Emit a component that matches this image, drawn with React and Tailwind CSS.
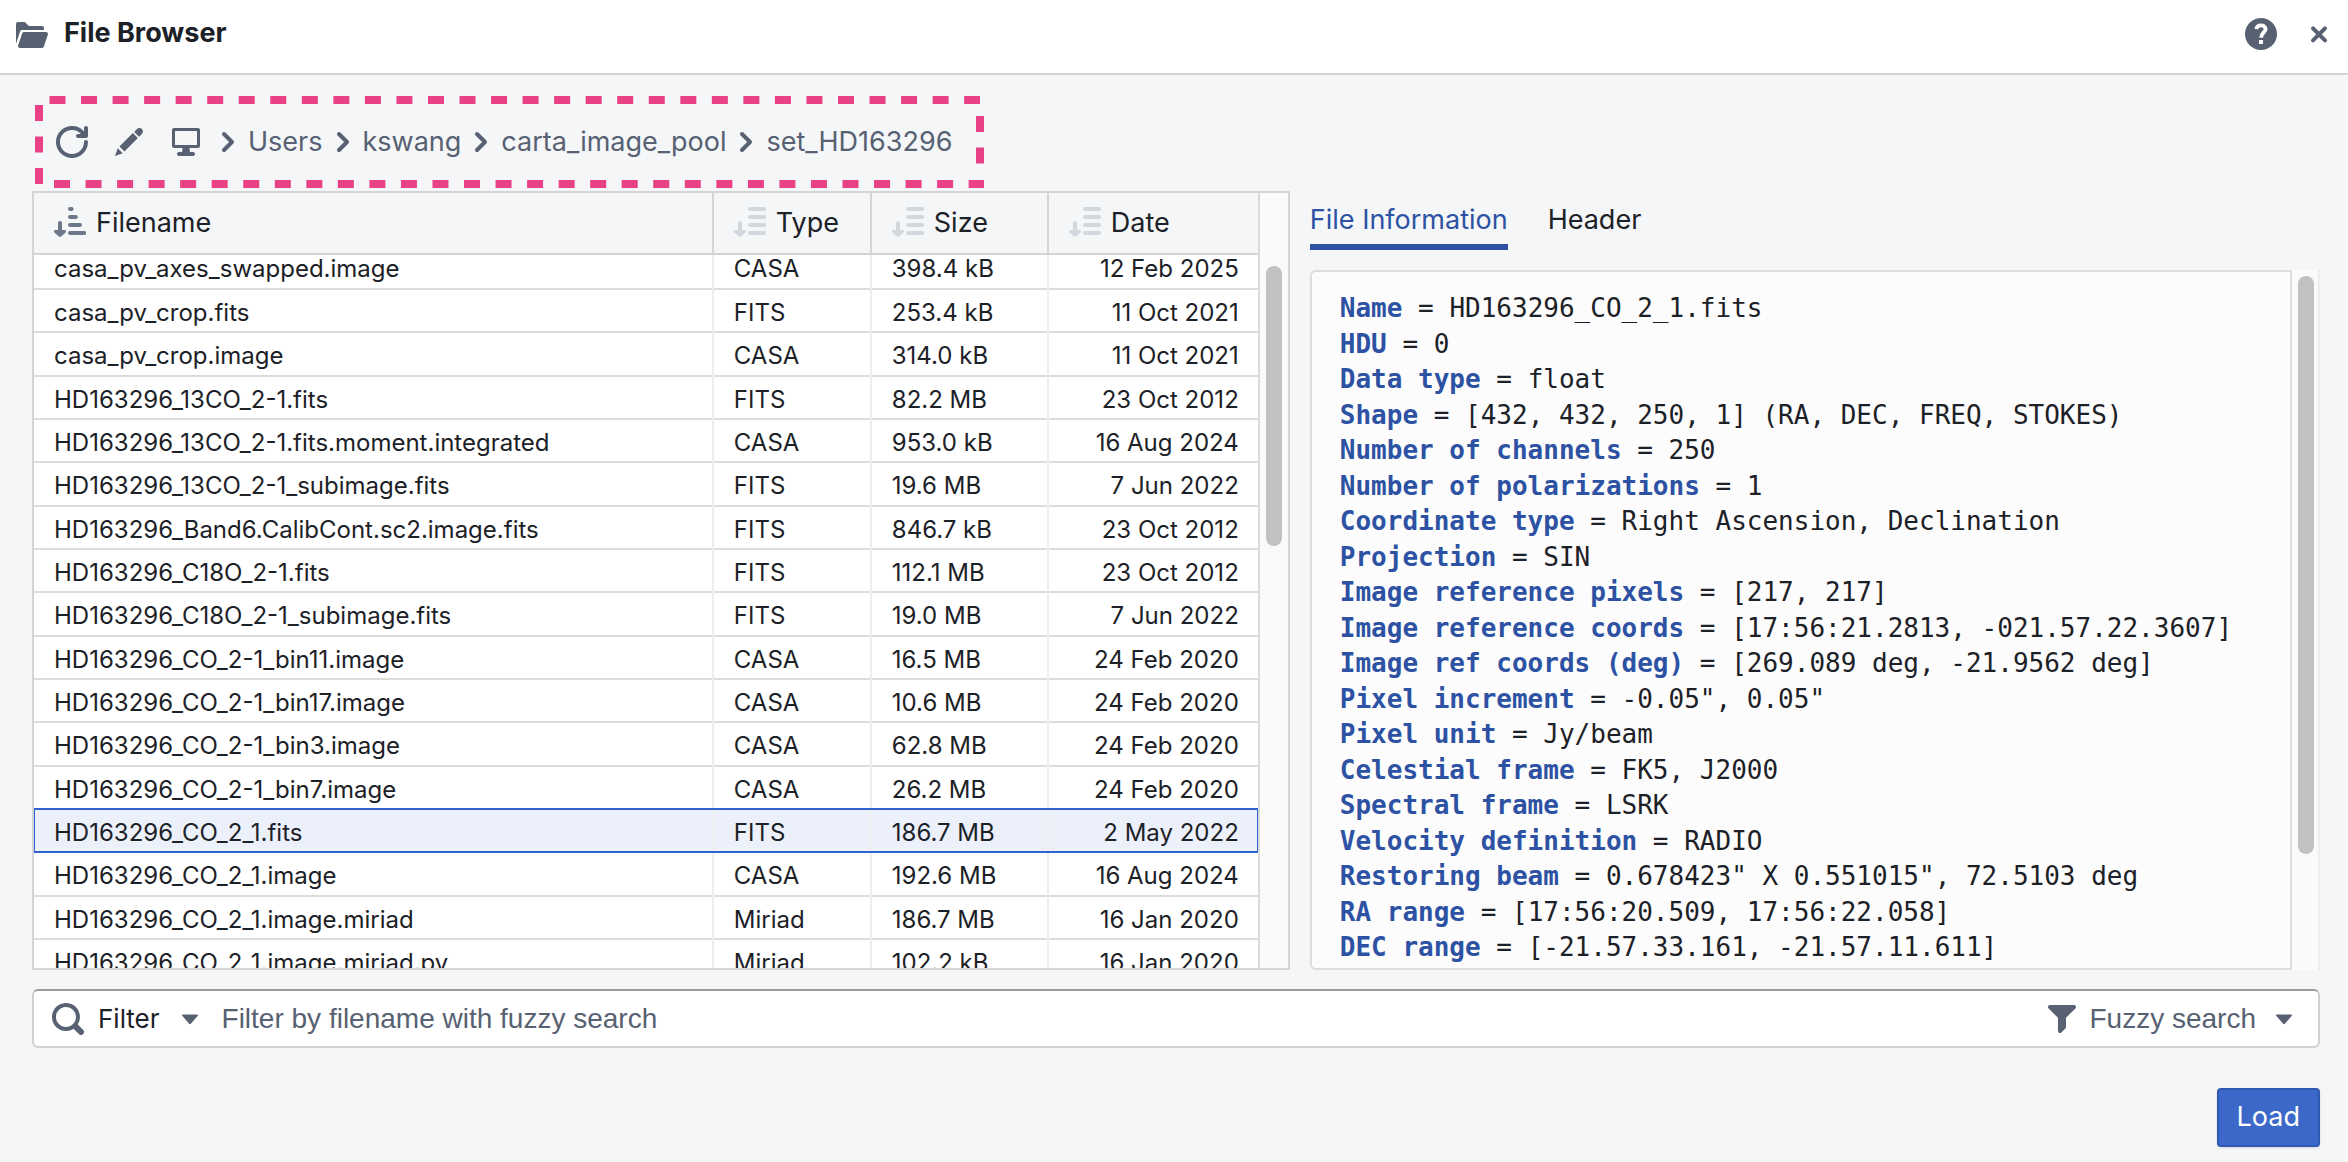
import React from "react";

const files = [
  ["casa_pv_axes_swapped.image", "CASA", "398.4 kB", "12 Feb 2025"],
  ["casa_pv_crop.fits", "FITS", "253.4 kB", "11 Oct 2021"],
  ["casa_pv_crop.image", "CASA", "314.0 kB", "11 Oct 2021"],
  ["HD163296_13CO_2-1.fits", "FITS", "82.2 MB", "23 Oct 2012"],
  ["HD163296_13CO_2-1.fits.moment.integrated", "CASA", "953.0 kB", "16 Aug 2024"],
  ["HD163296_13CO_2-1_subimage.fits", "FITS", "19.6 MB", "7 Jun 2022"],
  ["HD163296_Band6.CalibCont.sc2.image.fits", "FITS", "846.7 kB", "23 Oct 2012"],
  ["HD163296_C18O_2-1.fits", "FITS", "112.1 MB", "23 Oct 2012"],
  ["HD163296_C18O_2-1_subimage.fits", "FITS", "19.0 MB", "7 Jun 2022"],
  ["HD163296_CO_2-1_bin11.image", "CASA", "16.5 MB", "24 Feb 2020"],
  ["HD163296_CO_2-1_bin17.image", "CASA", "10.6 MB", "24 Feb 2020"],
  ["HD163296_CO_2-1_bin3.image", "CASA", "62.8 MB", "24 Feb 2020"],
  ["HD163296_CO_2-1_bin7.image", "CASA", "26.2 MB", "24 Feb 2020"],
  ["HD163296_CO_2_1.fits", "FITS", "186.7 MB", "2 May 2022"],
  ["HD163296_CO_2_1.image", "CASA", "192.6 MB", "16 Aug 2024"],
  ["HD163296_CO_2_1.image.miriad", "Miriad", "186.7 MB", "16 Jan 2020"],
  ["HD163296_CO_2_1.image.miriad.pv", "Miriad", "102.2 kB", "16 Jan 2020"],
];
const selected = "HD163296_CO_2_1.fits";

const info = [
  ["Name", "HD163296_CO_2_1.fits"],
  ["HDU", "0"],
  ["Data type", "float"],
  ["Shape", "[432, 432, 250, 1] (RA, DEC, FREQ, STOKES)"],
  ["Number of channels", "250"],
  ["Number of polarizations", "1"],
  ["Coordinate type", "Right Ascension, Declination"],
  ["Projection", "SIN"],
  ["Image reference pixels", "[217, 217]"],
  ["Image reference coords", "[17:56:21.2813, -021.57.22.3607]"],
  ["Image ref coords (deg)", "[269.089 deg, -21.9562 deg]"],
  ["Pixel increment", "-0.05\", 0.05\""],
  ["Pixel unit", "Jy/beam"],
  ["Celestial frame", "FK5, J2000"],
  ["Spectral frame", "LSRK"],
  ["Velocity definition", "RADIO"],
  ["Restoring beam", "0.678423\" X 0.551015\", 72.5103 deg"],
  ["RA range", "[17:56:20.509, 17:56:22.058]"],
  ["DEC range", "[-21.57.33.161, -21.57.11.611]"],
];

const crumbs = ["Users", "kswang", "carta_image_pool", "set_HD163296"];

function Icon({ className = "size-8", children }) {
  return (
    <svg viewBox="0 0 16 16" className={`shrink-0 ${className}`} fill="currentColor" aria-hidden="true">
      {children}
    </svg>
  );
}

const FolderOpen = () => (
  <Icon>
    <path d="M2.06 6.69c.14-.4.5-.69.94-.69h11V5c0-.55-.45-1-1-1H6.41l-1.7-1.71A.997.997 0 004 2H1c-.55 0-1 .45-1 1v9.84l2.05-6.15h.01zM16 8c0-.55-.45-1-1-1H4a.99.99 0 00-.94.69l-2 6c-.04.09-.06.2-.06.31 0 .55.45 1 1 1h11c.44 0 .81-.29.94-.69l2-6c.04-.09.06-.2.06-.31z" />
  </Icon>
);
const Help = () => (
  <Icon>
    <circle cx="8" cy="8" r="8" />
    <path d="M5.7 5.6C5.8 4.3 6.7 3.7 8 3.7s2.3.7 2.3 1.9C10.3 7 8.1 7.4 8.1 9.9" fill="none" stroke="white" strokeWidth="1.9" />
    <path d="M7 11h2v2H7z" fill="white" />
  </Icon>
);
const Cross = () => (
  <Icon>
    <path d="M5 5.2l6 6M11 5.2l-6 6" fill="none" stroke="currentColor" strokeWidth="2" strokeLinecap="round" />
  </Icon>
);
const Refresh = () => (
  <Icon>
    <path d="M14.99 6.99c-.55 0-1 .45-1 1 0 3.31-2.69 6-6 6s-6-2.69-6-6 2.69-6 6-6c1.77 0 3.36.78 4.46 2h-1.46c-.55 0-1 .45-1 1s.45 1 1 1h4c.55 0 1-.45 1-1v-4c0-.55-.45-1-1-1s-1 .45-1 1v1.74A7.95 7.95 0 007.99 0c-4.42 0-8 3.58-8 8s3.58 8 8 8 8-3.58 8-8c0-.56-.45-1.01-1-1.01z" />
  </Icon>
);
const Pencil = () => (
  <Icon>
    <path d="M3.25 10.26l2.47 2.47 6.69-6.69-2.46-2.48-6.7 6.7zM.99 14.99l3.86-1.39-2.46-2.44L.99 15zm12.25-14c-.48 0-.92.2-1.24.51l-1.44 1.44 2.47 2.47 1.44-1.44c.32-.32.51-.75.51-1.24.01-.95-.77-1.74-1.74-1.74z" />
  </Icon>
);
const Desktop = () => (
  <Icon>
    <path d="M14 1H2c-.55 0-1 .45-1 1v8c0 .55.45 1 1 1h4.3l-.3 2H4.5c-.55 0-1 .45-1 1s.45 1 1 1h7c.55 0 1-.45 1-1s-.45-1-1-1H10l-.3-2H14c.55 0 1-.45 1-1V2c0-.55-.45-1-1-1zm-.5 8.500h-11v-7h11v7z" />
  </Icon>
);
const ChevronRight = () => (
  <Icon>
    <path d="M6 4l4 4-4 4" fill="none" stroke="currentColor" strokeWidth="2" strokeLinecap="round" strokeLinejoin="round" />
  </Icon>
);
const Search = () => (
  <Icon>
    <path d="M15.55 13.43l-2.67-2.68a6.94 6.94 0 001.11-3.76c0-3.87-3.13-7-7-7s-7 3.13-7 7 3.13 7 7 7c1.39 0 2.68-.42 3.76-1.11l2.68 2.67a1.498 1.498 0 102.12-2.12zm-8.56-1.44c-2.76 0-5-2.24-5-5s2.24-5 5-5 5 2.24 5 5-2.24 5-5 5z" />
  </Icon>
);
const Funnel = () => (
  <Icon>
    <path d="M13.99.99h-12a1.003 1.003 0 00-.71 1.71l4.71 4.71V14a1.003 1.003 0 001.71.71l2-2c.18-.18.29-.43.29-.71V7.41L14.7 2.700a1.003 1.003 0 00-.71-1.71z" />
  </Icon>
);
const Caret = () => (
  <Icon>
    <path d="M4.4 5.7h7.2c.4 0 .5.4.3.7L8.4 10.4c-.2.25-.6.25-.8 0L4.1 6.4c-.2-.3-.1-.7.3-.7z" />
  </Icon>
);

function SortIcon({ active }) {
  const ends = active ? [8.8, 10.9, 13, 15.1] : [15.1, 15.1, 15.1, 15.1];
  return (
    <Icon className={active ? "size-8 text-[#6d788a]" : "size-8 text-[#d3d8de]"}>
      <path
        d={`M8 1h${ends[0] - 8}M8 5h${ends[1] - 8}M8 9h${ends[2] - 8}M8 13h${ends[3] - 8}`}
        fill="none" stroke="currentColor" strokeWidth="2" strokeLinecap="round"
      />
      <path d="M3 8v5" fill="none" stroke="currentColor" strokeWidth="2" strokeLinecap="round" />
      <path d="M.7 11.5h4.6c.7 0 .9.7.5 1.2l-2.2 2.1c-.4.3-.8.3-1.2 0L.2 12.700c-.4-.5-.2-1.2.5-1.2z" />
    </Icon>
  );
}

/* Dashed frame drawn round the path bar */
function Highlight() {
  return (
    <svg
      className="pointer-events-none absolute top-0 left-0 h-[92px] w-[949px]"
      viewBox="0 0 949 92" fill="none" stroke="#e84185" strokeWidth="8" strokeDasharray="16 15.54" aria-hidden="true"
    >
      <path d="M14.5 4H945M19 88H949M4 9V92M945 20V76" />
    </svg>
  );
}

const columns = [
  { name: "Filename", active: true },
  { name: "Type" },
  { name: "Size" },
  { name: "Date" },
];

function Columns() {
  return (
    <colgroup>
      <col />
      <col className="w-[158px]" />
      <col className="w-[177px]" />
      <col className="w-[210px]" />
    </colgroup>
  );
}

function FileTable() {
  return (
    <section className="flex h-[779px] min-w-0 flex-[1256] border-2 border-[#d3d4d6] bg-[#fafafa]">
      <div className="min-w-0 flex-1 overflow-hidden border-r-2 border-[#d9dadc] bg-white">
        <table className="relative z-10 w-full table-fixed border-collapse bg-[#f5f6f8] text-left text-[27px] leading-[30px] outline-2 outline-[#d3d4d6]">
          <Columns />
          <thead>
            <tr>
              {columns.map((c) => (
                <th key={c.name} scope="col" className="h-[60px] border-r-2 border-[#d3d4d6] p-0 pl-5 font-normal last:border-r-0">
                  <button type="button" className="flex items-center gap-2.5">
                    <SortIcon active={c.active} />
                    {c.name}
                  </button>
                </th>
              ))}
            </tr>
          </thead>
        </table>
        <table className="-mt-[7px] w-full table-fixed border-collapse text-left text-[24px] leading-[30px]">
          <Columns />
          <tbody>
            {files.map(([name, type, size, date]) => (
              <tr
                key={name}
                aria-selected={name === selected}
                className="h-[43px] border-b-2 border-[#dcdcdd] nth-[3n]:h-11 aria-selected:bg-[#ebf0fb] aria-selected:outline-2 aria-selected:-outline-offset-1 aria-selected:outline-[#2f62cf]"
              >
                <td className="truncate border-r-2 border-r-[#eeeeef] p-0 pt-1 pl-5">{name}</td>
                <td className="border-r-2 border-r-[#eeeeef] p-0 pt-1 pl-5">{type}</td>
                <td className="border-r-2 border-r-[#eeeeef] p-0 pt-1 pl-5">{size}</td>
                <td className="p-0 pt-1 pr-[19px] text-right">{date}</td>
              </tr>
            ))}
          </tbody>
        </table>
      </div>
      <div className="w-7 pt-[73px] pl-1.5">
        <div className="h-[280px] w-4 rounded-full bg-[#c1c1c1]" />
      </div>
    </section>
  );
}

function InfoPane() {
  return (
    <section className="flex h-[779px] min-w-0 flex-[1012] flex-col">
      <div role="tablist" className="mb-5 flex gap-10 text-[27px] leading-[48px]">
        <button type="button" role="tab" aria-selected="true" className="border-b-6 border-[#2d52a3] pt-[5px] text-[#2d52a3]">
          File Information
        </button>
        <button type="button" role="tab" aria-selected="false" className="border-b-6 border-transparent pt-[5px]">Header</button>
      </div>
      <div className="flex min-h-0 flex-1">
        <div className="min-w-0 flex-1 overflow-hidden rounded-l-md border-2 border-[#dcdddf] bg-[#fcfcfc] py-[18px] pl-7 font-['DejaVu_Sans_Mono',monospace] text-[26px] whitespace-pre">
          {info.map(([key, value]) => (
            <p key={key} className="h-9 leading-9 even:h-[35px]">
              <b className="text-[#2d52a3]">{key}</b> = {value}
            </p>
          ))}
        </div>
        <div className="w-7 border-r-2 border-[#eeeeef] bg-[#fafafa] pt-1.5 pl-1.5">
          <div className="h-[578px] w-4 rounded-full bg-[#c1c1c1]" />
        </div>
      </div>
    </section>
  );
}

export default function App() {
  return (
    <div className="flex min-h-screen flex-col bg-[#f5f6f8] font-['Inter',sans-serif] text-[#1c2127]">
      <header className="flex h-[75px] items-center gap-4 border-b-2 border-[#d3d4d6] bg-white px-4 pb-1.5 text-[#576172]">
        <FolderOpen />
        <h1 className="flex-1 text-[27px] font-bold text-[#1c2127]">File Browser</h1>
        <button type="button" aria-label="Help" className="mr-2.5"><Help /></button>
        <button type="button" aria-label="Close" className="-mr-[3px]"><Cross /></button>
      </header>

      <main className="flex flex-col px-7 pl-8 pt-[21px]">
        <nav aria-label="Path" className="relative ml-[3px] flex h-[92px] w-fit items-center pl-[21px] text-[27px] text-[#576172]">
          <button type="button" aria-label="Refresh" className="mr-[25px]"><Refresh /></button>
          <button type="button" aria-label="Edit path" className="mr-[25px]"><Pencil /></button>
          <button type="button" aria-label="Root folder" className="mr-1.5"><Desktop /></button>
          {crumbs.map((c) => (
            <span key={c} className="flex items-center">
              <span className="mx-1"><ChevronRight /></span>
              <a href="#">{c}</a>
            </span>
          ))}
          <Highlight />
        </nav>

        <div className="mt-[3px] flex gap-5">
          <FileTable />
          <InfoPane />
        </div>

        <form className="mt-[19px] flex h-[59px] items-center rounded-md border-2 border-[#cfd0d2] border-t-[#9b9c9e] bg-white px-[18px] font-['Liberation_Sans',sans-serif] text-[28px] text-[#576172]">
          <button type="button" className="flex items-center font-['Inter',sans-serif] text-[26px] text-[#1c2127]">
            <span className="mr-3.5 text-[#576172]"><Search /></span>
            Filter
            <span className="ml-3.5 text-[#576172]"><Caret /></span>
          </button>
          <input
            type="text"
            aria-label="Filter files"
            placeholder="Filter by filename with fuzzy search"
            className="ml-4 min-w-0 flex-1 outline-none placeholder:text-[#576172]"
          />
          <button type="button" className="flex items-center">
            <span className="mr-3"><Funnel /></span>
            Fuzzy search
            <span className="ml-3"><Caret /></span>
          </button>
        </form>

        <button type="button" className="mt-10 h-[59px] self-end rounded-sm border-2 border-[#2f59b3] bg-[#3b68c9] px-[18px] text-[27px] text-white shadow-sm">
          Load
        </button>
      </main>
    </div>
  );
}
